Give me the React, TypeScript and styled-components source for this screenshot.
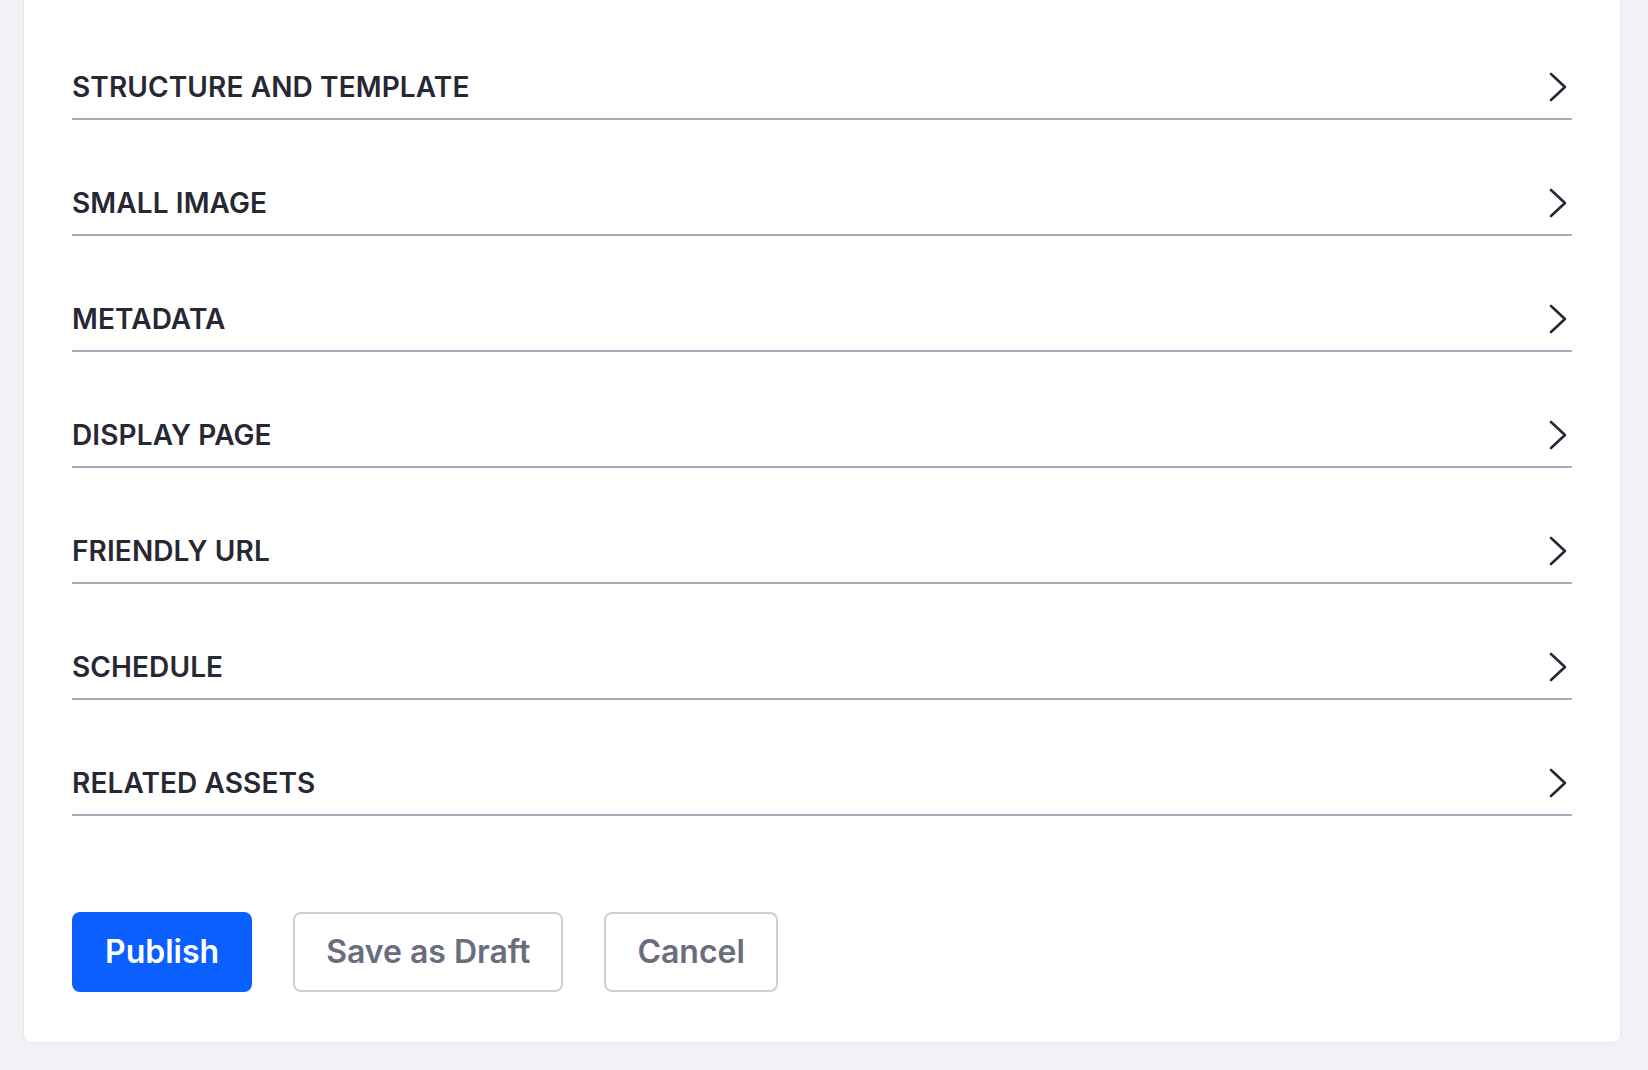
import React from 'react';
import styled, { createGlobalStyle } from 'styled-components';

const GlobalStyle = createGlobalStyle`
  html, body {
    margin: 0;
    padding: 0;
    background: #f1f2f5;
    font-family: Inter, "Noto Sans", "Liberation Sans", sans-serif;
    -webkit-font-smoothing: antialiased;
  }
  * {
    box-sizing: border-box;
  }
`;

const Page = styled.div`
  min-height: 1070px;
  padding: 0 27px 28px 23px;
`;

const Card = styled.div`
  background: #ffffff;
  border: 1px solid #e7e7ed;
  border-top: none;
  border-radius: 0 0 8px 8px;
  padding: 4px 48px 50px;
`;

const Panel = styled.div`
  display: flex;
  flex-direction: column;
`;

const PanelHeader = styled.button`
  display: flex;
  align-items: center;
  justify-content: space-between;
  width: 100%;
  height: 116px;
  padding: 65px 0 13px;
  background: transparent;
  border: none;
  border-bottom: 2px solid #a7a9bc;
  cursor: pointer;
  font-family: inherit;
  text-align: left;
`;

const PanelTitle = styled.span`
  font-size: 28px;
  line-height: 36px;
  font-weight: 600;
  letter-spacing: 0.004em;
  text-transform: uppercase;
  color: #272833;
`;

const ChevronIcon = styled.svg`
  flex: none;
  width: 20px;
  height: 32px;
  margin-right: 4px;
  color: #272833;
`;

const ButtonRow = styled.div`
  display: flex;
  gap: 41px;
  margin-top: 96px;
`;

const Button = styled.button<{ $primary?: boolean }>`
  height: 80px;
  padding: 0 31px;
  border-radius: 8px;
  border: 2px solid ${(p) => (p.$primary ? '#0b5fff' : '#cdced9')};
  background: ${(p) => (p.$primary ? '#0b5fff' : '#ffffff')};
  color: ${(p) => (p.$primary ? '#ffffff' : '#6b6c7e')};
  font-family: inherit;
  font-size: 32px;
  font-weight: 600;
  line-height: 1;
  cursor: pointer;
`;

const SECTIONS = [
  'Structure and Template',
  'Small Image',
  'Metadata',
  'Display Page',
  'Friendly URL',
  'Schedule',
  'Related Assets',
];

const Chevron = () => (
  <ChevronIcon viewBox="0 0 20 32" fill="none">
    <path
      d="M3 3 L17 16 L3 29"
      stroke="currentColor"
      strokeWidth="2.6"
      strokeLinecap="round"
      strokeLinejoin="round"
    />
  </ChevronIcon>
);

const App: React.FC = () => {
  return (
    <>
      <GlobalStyle />
      <Page>
        <Card>
          <Panel>
            {SECTIONS.map((title) => (
              <PanelHeader key={title} type="button">
                <PanelTitle>{title}</PanelTitle>
                <Chevron />
              </PanelHeader>
            ))}
          </Panel>
          <ButtonRow>
            <Button $primary type="button">Publish</Button>
            <Button type="button">Save as Draft</Button>
            <Button type="button">Cancel</Button>
          </ButtonRow>
        </Card>
      </Page>
    </>
  );
};

export default App;
